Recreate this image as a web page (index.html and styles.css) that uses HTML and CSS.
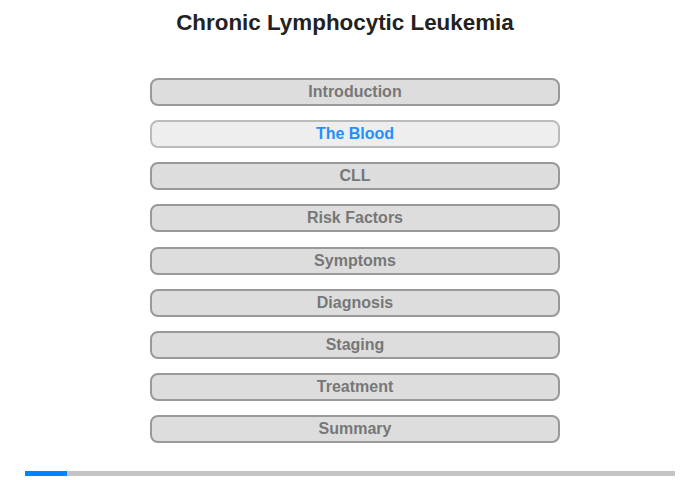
FILE: index.html
```html
<!DOCTYPE html>
<html>
<head>
<meta charset="utf-8">
<link rel="stylesheet" href="styles.css">
</head>
<body>
<div class="page">
  <h1 class="title">Chronic Lymphocytic Leukemia</h1>
  <nav class="menu">
    <div class="item">Introduction</div>
    <div class="item active">The Blood</div>
    <div class="item">CLL</div>
    <div class="item">Risk Factors</div>
    <div class="item">Symptoms</div>
    <div class="item">Diagnosis</div>
    <div class="item">Staging</div>
    <div class="item">Treatment</div>
    <div class="item">Summary</div>
  </nav>
  <div class="progress"><div class="progress-fill" style="width:42px"></div></div>
</div>
</body>
</html>
```
FILE: styles.css
```css
html, body {
  margin: 0;
  padding: 0;
  background: #fff;
}
.page {
  width: 700px;
  height: 480px;
  font-family: "Liberation Sans", Arial, sans-serif;
  display: flex;
  flex-direction: column;
}
.title {
  margin: 11px 10px 0 0;
  font-size: 22.4px;
  line-height: 24px;
  font-weight: bold;
  color: #222;
  text-align: center;
}
.menu {
  margin: 43px 0 0 150px;
  width: 410px;
  display: flex;
  flex-direction: column;
  gap: 14.125px;
}
.item {
  box-sizing: border-box;
  height: 28px;
  border: 2px solid #999;
  border-radius: 8px;
  background: #ddd;
  color: #777;
  font-size: 16px;
  font-weight: bold;
  line-height: 24px;
  text-align: center;
}
.item.active {
  border-color: #bbb;
  background: #eee;
  color: #1e90ff;
}
.progress {
  margin: 28px 0 0 25px;
  width: 650px;
  height: 5px;
  background: #c4c4c4;
}
.progress-fill {
  height: 100%;
  background: #0084ff;
}
```
